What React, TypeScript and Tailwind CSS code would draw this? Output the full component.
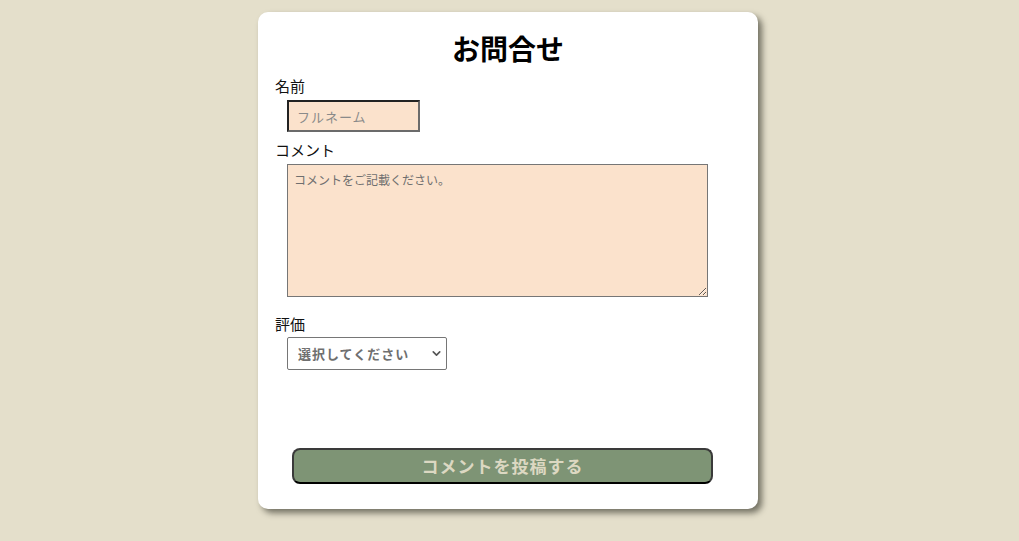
import { ChevronDown } from "lucide-react";

const FONT = { fontFamily: '"Noto Sans CJK JP", "Noto Sans", sans-serif' };

export default function App() {
  return (
    <div
      style={FONT}
      className="min-h-[541px] w-full bg-[#e4dfcb] flex justify-center pt-3 pr-[3px]"
    >
      <form className="w-[500px] h-[497px] bg-white rounded-[10px] shadow-[4px_4px_6px_rgba(40,40,30,0.6)] px-[17px] pt-5 flex flex-col">
        <h1 className="text-center text-[28px] leading-[32px] font-bold text-black">
          お問合せ
        </h1>

        <label className="mt-3 text-[15px] leading-5 text-[#111]">名前</label>
        <input
          type="text"
          placeholder="フルネーム"
          className="mt-1 ml-3 w-[133px] h-[32px] bg-[#fbe2cc] border-2 border-t-[#222] border-l-[#222] border-r-[#6b6b6b] border-b-[#6b6b6b] px-2 text-[13px] tracking-[1px] placeholder:text-[#8a8a8a] outline-none"
        />

        <label className="mt-2 text-[15px] leading-5 text-[#111]">コメント</label>
        <textarea
          placeholder="コメントをご記載ください。"
          className="mt-1 ml-3 w-[421px] h-[133px] bg-[#fbe2cc] border border-[#767676] px-[6px] py-[7px] text-[12px] leading-[16px] placeholder:text-[#6f6f6f] outline-none"
        />

        <label className="mt-[17px] text-[15px] leading-5 text-[#111]">評価</label>
        <div className="relative mt-[3px] ml-3 w-[160px] h-[33px]">
          <select
            defaultValue=""
            className="appearance-none w-full h-full border border-[#767676] rounded-[2px] bg-white pl-[10px] text-[13px] font-bold tracking-[1px] text-[#6f6f6f] outline-none"
          >
            <option value="" disabled>
              選択してください
            </option>
            <option value="5">5</option>
            <option value="4">4</option>
            <option value="3">3</option>
          </select>
          <ChevronDown
            size={13}
            strokeWidth={3}
            className="absolute right-[4px] top-[10px] text-[#555] pointer-events-none"
          />
        </div>

        <button
          type="button"
          className="mt-[78px] ml-[17px] w-[421px] h-[36px] bg-[#7e9475] border-2 border-[#3a3a3a] border-b-black rounded-[8px] text-[17px] font-bold tracking-[1px] text-[#dcd8c2]"
        >
          コメントを投稿する
        </button>
      </form>
    </div>
  );
}
